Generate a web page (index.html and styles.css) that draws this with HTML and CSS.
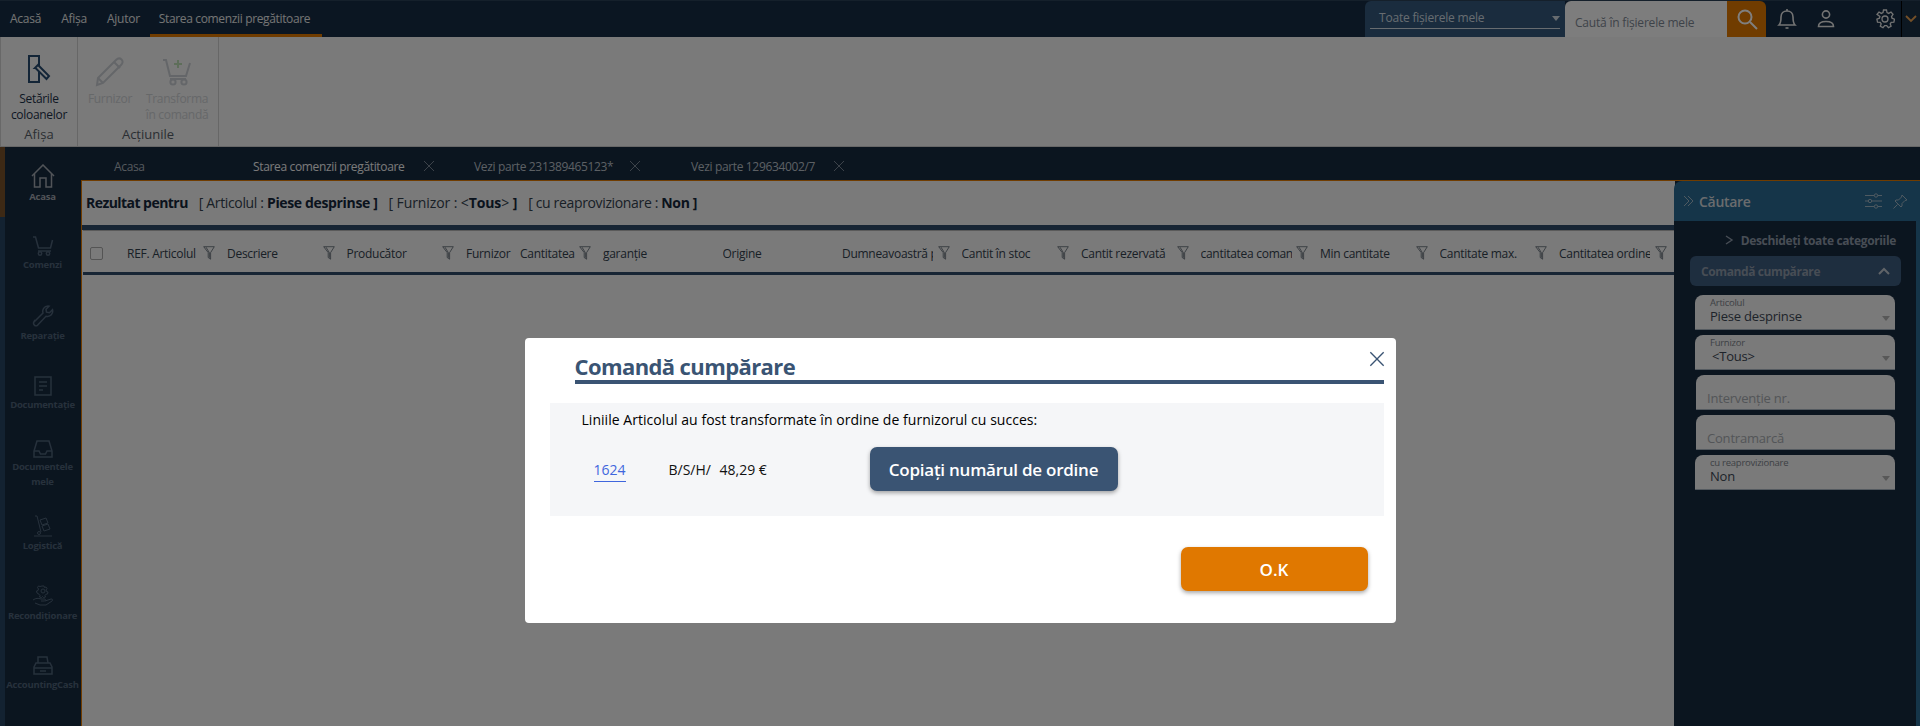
FILE: index.html
```html
<!DOCTYPE html>
<html lang="ro">
<head>
<meta charset="utf-8">
<title>Starea comenzii pregătitoare</title>
<link rel="stylesheet" href="styles.css">
</head>
<body>
<svg class="sprite" aria-hidden="true">
  <symbol id="funnel" viewBox="0 0 12 14"><path d="M.7.7h10.6L7.6 6.6v6.6l-1.300-.8-1.100-.9V6.600z M3 1.200l3.400 5.600v5" fill="none" stroke="currentColor" stroke-width=".8"/></symbol>
  <symbol id="cross" viewBox="0 0 12 12"><path d="M1 1l10 10M11 1L1 11" fill="none" stroke="currentColor" stroke-width="1"/></symbol>
  <symbol id="caret" viewBox="0 0 8 5"><path d="M0 0h8L4 5z" fill="currentColor"/></symbol>
</svg>

<div class="app">
  <header class="topbar">
    <nav class="menu">
      <a class="menu-item">Acasă</a>
      <a class="menu-item">Afișa</a>
      <a class="menu-item">Ajutor</a>
      <a class="menu-item menu-active">Starea comenzii pregătitoare</a>
    </nav>
    <div class="top-tools">
      <div class="scope"><span class="scope-text">Toate fișierele mele</span><svg class="scope-caret"><use href="#caret"/></svg></div>
      <div class="search-box"><span>Caută în fișierele mele</span></div>
      <div class="search-btn">
        <svg width="24" height="24" viewBox="0 0 24 24" fill="none" stroke="currentColor" stroke-width="2"><circle cx="10" cy="10" r="6.500"/><path d="M15 15l7 7"/></svg>
      </div>
      <div class="tool tool-bell">
        <svg width="20" height="22" viewBox="0 0 20 22" fill="none" stroke="currentColor" stroke-width="1.600"><path d="M2 17c2-2 2-4 2-8 0-3.500 2.500-6 6-6s6 2.500 6 6c0 4 0 6 2 8z"/><path d="M10 1v2"/><path d="M8.500 20h3"/></svg>
      </div>
      <div class="tool tool-user">
        <svg width="20" height="20" viewBox="0 0 20 20" fill="none" stroke="currentColor" stroke-width="1.600"><circle cx="10" cy="5.500" r="3.600"/><path d="M2.500 17.500c0-3.500 2.500-5 7.500-5s7.500 1.500 7.500 5z"/></svg>
      </div>
      <div class="tool tool-gear">
        <svg width="20" height="20" viewBox="0 0 20 20" fill="none" stroke="currentColor" stroke-width="1.300"><circle cx="10" cy="10" r="3"/><path d="M8.500 1h3l.5 2.600 1.700.8L16 3l2 2.400-1.500 2.100.5 1.700 2.500 1-.6 3-2.700.1-1 1.500.9 2.500-2.700 1.400-1.700-2h-2l-1.700 2-2.700-1.400.9-2.500-1-1.500-2.700-.1-.6-3 2.500-1 .5-1.700L2 5.400 4 3l2.300 1.400 1.700-.8z"/></svg>
      </div>
      <div class="tool-more">
        <svg width="12" height="8" viewBox="0 0 12 8" fill="none" stroke="currentColor" stroke-width="1.800"><path d="M1 1l5 5 5-5"/></svg>
      </div>
    </div>
  </header>

  <section class="ribbon">
    <div class="rib-group rib-view">
      <div class="rib-items">
        <div class="rib-item rib-columns">
          <svg class="rib-icon" width="24" height="28" viewBox="0 0 24 28" fill="none" stroke="#264a6e" stroke-width="2"><path d="M2 1h10v26H2z"/><path d="M8 13l3-3 11 11-2.500 3-11-11z" fill="#f4f4f4"/></svg>
          <span class="rib-label">Setările<br>coloanelor</span>
        </div>
      </div>
      <div class="rib-title">Afișa</div>
    </div>
    <div class="rib-group rib-actions">
      <div class="rib-items">
        <div class="rib-item rib-off rib-supplier">
          <svg class="rib-icon" width="30" height="30" viewBox="0 0 30 30" fill="none" stroke="#c9cdd2" stroke-width="2"><path d="M3 21L21 3c2-2 4-2 5.500-.5S28 6 26 8L8 26l-6 2z"/><path d="M19 5l6 6M3 21l5 5"/></svg>
          <span class="rib-label">Furnizor</span>
        </div>
        <div class="rib-item rib-off rib-order">
          <svg class="rib-icon" width="30" height="30" viewBox="0 0 30 30" fill="none" stroke="#c9cdd2" stroke-width="2"><path d="M1 3h3l4 16h16l4-13"/><circle cx="11" cy="25" r="2.600"/><circle cx="22" cy="25" r="2.600"/><path d="M8 22h16"/><path d="M16 3v8M12 7h8" stroke="#bcdcb4"/></svg>
          <span class="rib-label">Transforma<br>în comandă</span>
        </div>
      </div>
      <div class="rib-title">Acțiunile</div>
    </div>
  </section>

  <div class="workspace">
    <aside class="side">
      <a class="side-item side-current">
        <svg width="24" height="24" viewBox="0 0 24 24" fill="none" stroke="currentColor" stroke-width="1.500"><path d="M1 12L12 1l11 11"/><path d="M3.500 10v13h5.500v-9h6v9h5.500V10"/></svg>
        <span>Acasa</span>
      </a>
      <a class="side-item">
        <svg width="22" height="20" viewBox="0 0 22 20" fill="none" stroke="currentColor" stroke-width="1.500"><path d="M1 1h2.500l3 11h12l2-8"/><path d="M6 15h13"/><circle cx="8" cy="17.500" r="1.700"/><circle cx="16" cy="17.500" r="1.700"/></svg>
        <span>Comenzi</span>
      </a>
      <a class="side-item">
        <svg width="22" height="22" viewBox="0 0 22 22" fill="none" stroke="currentColor" stroke-width="1.500"><path d="M2 17L11 8c-1-3 1-7 5-7l1 .2-3 3 .5 3 3 .5 3-3c1 4-2 7.500-6.500 6.500l-8.500 9c-2 2-5-1-3.500-3.500z"/></svg>
        <span>Reparație</span>
      </a>
      <a class="side-item">
        <svg width="18" height="20" viewBox="0 0 18 20" fill="none" stroke="currentColor" stroke-width="1.500"><path d="M1 1h16v18H1z"/><path d="M5 6h8M5 10h8M5 14h4"/></svg>
        <span>Documentație</span>
      </a>
      <a class="side-item">
        <svg width="20" height="18" viewBox="0 0 20 18" fill="none" stroke="currentColor" stroke-width="1.500"><path d="M4 1h12l3 10v6H1v-6z"/><path d="M1 11h5l1.500 3h5L14 11h5"/></svg>
        <span>Documentele mele</span>
      </a>
      <a class="side-item">
        <svg width="18" height="22" viewBox="0 0 18 22" fill="none" stroke="currentColor" stroke-width="1"><path d="M1 1h2l4 16"/><path d="M6 5l6-2 2 5-6 2zM8 11l6-2 2 5-6 2z"/><circle cx="5" cy="18" r="1.500"/><path d="M0 21h18"/></svg>
        <span>Logistică</span>
      </a>
      <a class="side-item">
        <svg width="22" height="22" viewBox="0 0 22 22" fill="none" stroke="currentColor" stroke-width="1"><circle cx="11" cy="6" r="2"/><path d="M10 1h2l.5 1.500 1.500-.5 1 1.500-1 1.500.5 1.500 1.500.5-.5 2-1.500.2-1 1.300.5 1.500-2 .5-1-1-1 1-2-.5.5-1.500-1-1.300L5 8l-.5-2 1.500-.5.500-1.500-1-1.500 1-1.500 1.500.5z"/><path d="M1 15c3-2 5-2 8-1l4 0c1 1 0 2-1 2H9m4 0l6-2c2 0 2 1 1 2l-6 4H8l-5-2"/></svg>
        <span>Recondiționare</span>
      </a>
      <a class="side-item">
        <svg width="20" height="20" viewBox="0 0 20 20" fill="none" stroke="currentColor" stroke-width="1.500"><path d="M5 7V1h9l1 6"/><path d="M1 11l2-4h14l2 4v7H1z"/><path d="M1 12h18M7 15h6"/></svg>
        <span>AccountingCash</span>
      </a>
    </aside>

    <div class="main">
      <div class="tabs">
        <div class="tab tab-home">Acasa</div>
        <div class="tab tab-current"><span>Starea comenzii pregătitoare</span><svg class="tab-x"><use href="#cross"/></svg></div>
        <div class="tab tab-part-a"><span>Vezi parte 231389465123*</span><svg class="tab-x"><use href="#cross"/></svg></div>
        <div class="tab tab-part-b"><span>Vezi parte 129634002/7</span><svg class="tab-x"><use href="#cross"/></svg></div>
      </div>
      <div class="stage">
        <section class="results">
          <div class="criteria">
            <b class="crit-lead">Rezultat pentru</b>
            <span>[ Articolul : <b>Piese desprinse</b> <b>]</b></span>
            <span class="crit-wide">[ Furnizor : &lt;<b>Tous</b>&gt; <b>]</b></span>
            <span>[ cu reaprovizionare : <b>Non</b> <b>]</b></span>
          </div>
          <div class="thead">
            <div class="th-check"><i class="checkbox"></i></div>
            <div class="th w100"><span>REF. Articolul</span><svg class="funnel"><use href="#funnel"/></svg></div>
            <div class="th"><span>Descriere</span><svg class="funnel"><use href="#funnel"/></svg></div>
            <div class="th"><span>Producător</span><svg class="funnel"><use href="#funnel"/></svg></div>
            <div class="th w54"><span>Furnizor</span></div>
            <div class="th w83"><span>Cantitatea</span><svg class="funnel"><use href="#funnel"/></svg></div>
            <div class="th"><span>garanție</span></div>
            <div class="th"><span>Origine</span></div>
            <div class="th"><span>Dumneavoastră preț</span><svg class="funnel"><use href="#funnel"/></svg></div>
            <div class="th"><span>Cantit în stoc</span><svg class="funnel"><use href="#funnel"/></svg></div>
            <div class="th"><span>Cantit rezervată</span><svg class="funnel"><use href="#funnel"/></svg></div>
            <div class="th"><span>cantitatea comandată</span><svg class="funnel"><use href="#funnel"/></svg></div>
            <div class="th"><span>Min cantitate</span><svg class="funnel"><use href="#funnel"/></svg></div>
            <div class="th"><span>Cantitate max.</span><svg class="funnel"><use href="#funnel"/></svg></div>
            <div class="th"><span>Cantitatea ordine</span><svg class="funnel"><use href="#funnel"/></svg></div>
          </div>
        </section>

        <aside class="finder">
          <div class="finder-head">
            <svg width="11" height="12" viewBox="0 0 11 12" fill="none" stroke="currentColor" stroke-width="1"><path d="M1 1l5 5-5 5M5 1l5 5-5 5"/></svg>
            <b>Căutare</b>
            <svg class="finder-sliders" width="17" height="16" viewBox="0 0 17 16" fill="none" stroke="currentColor" stroke-width="1"><path d="M0 2.500h17M0 8h17M0 13.500h17"/><circle cx="11" cy="2.500" r="1.700" fill="#2a6a92"/><circle cx="5" cy="8" r="1.700" fill="#2a6a92"/><circle cx="11" cy="13.500" r="1.700" fill="#2a6a92"/></svg>
            <svg class="finder-pin" width="15" height="15" viewBox="0 0 15 15" fill="none" stroke="currentColor" stroke-width="1"><path d="M9 1l5 5-2 .5-3 3 0 2.500-1 1-6-6 1-1h2.500l3-3zM4.500 10.500L.5 14.500"/></svg>
          </div>
          <div class="finder-body">
            <div class="open-all">
              <svg width="9" height="10" viewBox="0 0 9 10" fill="none" stroke="currentColor" stroke-width="1.400"><path d="M1 1l6 4-6 4"/></svg>
              <b>Deschideți toate categoriile</b>
            </div>
            <div class="accordion"><b>Comandă cumpărare</b>
              <svg width="12" height="8" viewBox="0 0 12 8" fill="none" stroke="currentColor" stroke-width="2"><path d="M1 7l5-5 5 5"/></svg>
            </div>
            <div class="fields">
              <div class="field"><small>Articolul</small><span>Piese desprinse</span><svg class="field-caret"><use href="#caret"/></svg></div>
              <div class="field"><small>Furnizor</small><span class="tous">&lt;Tous&gt;</span><svg class="field-caret"><use href="#caret"/></svg></div>
              <div class="field field-text"><span>Intervenţie nr.</span></div>
              <div class="field field-text"><span>Contramarcă</span></div>
              <div class="field"><small>cu reaprovizionare</small><span>Non</span><svg class="field-caret"><use href="#caret"/></svg></div>
            </div>
          </div>
        </aside>
      </div>
    </div>
  </div>
</div>

<div class="overlay">
  <div class="modal">
    <svg class="modal-close"><use href="#cross"/></svg>
    <h1 class="modal-title">Comandă cumpărare</h1>
    <div class="modal-panel">
      <p class="modal-msg">Liniile Articolul au fost transformate în ordine de furnizorul cu succes:</p>
      <div class="modal-row">
        <a class="order-link">1624</a>
        <span class="order-sup">B/S/H/</span>
        <span class="order-amt">48,29 €</span>
        <button class="btn btn-copy">Copiați numărul de ordine</button>
      </div>
    </div>
    <div class="modal-foot"><button class="btn btn-ok">O.K</button></div>
  </div>
</div>
</body>
</html>
```

FILE: styles.css
```css
* { box-sizing: border-box; }
html, body { height: 100%; }
body {
  margin: 0;
  overflow: hidden;
  font-family: "Open Sans", "Noto Sans", sans-serif;
  font-size: 12px;
  color: #1c2b3c;
  background: #f4f4f4;
}
a { color: inherit; text-decoration: none; }
button { font-family: inherit; }
.sprite { display: none; }

.app { display: flex; flex-direction: column; height: 726px; }

/* top bar */
.topbar {
  flex: 0 0 37px;
  display: flex;
  justify-content: space-between;
  background: #172d44;
  color: #e8e8e8;
  border-top: 1px solid #2b4157;
}
.menu { display: flex; white-space: nowrap; }
.menu-item {
  display: flex;
  align-items: center;
  padding: 2px 10px 0;
  letter-spacing: -.25px;
  border-bottom: 3px solid transparent;
}
.menu-active {
  width: 172px;
  padding-left: 9px;
  letter-spacing: -.35px;
  border-bottom-color: #e07800;
}
.top-tools { display: flex; align-items: stretch; color: #e6e6e6; white-space: nowrap; }
.scope {
  width: 200px;
  background: #34587c;
  border-radius: 6px 0 0 0;
  position: relative;
  padding: 8px 5px 0;
  color: #cfd8e0;
}
.scope-text { display: block; height: 20px; padding-left: 9px; border-bottom: 1px solid #cfd8e0; letter-spacing: -.2px; }
.scope-caret { position: absolute; right: 5px; top: 15px; width: 8px; height: 5px; color: #cfd8e0; }
.search-box {
  width: 162px;
  background: #fafafa;
  border-radius: 6px 0 0 0;
  padding: 13px 10px 0;
  color: #7d8793;
  letter-spacing: -.2px;
}
.search-btn {
  width: 39px;
  background: #e07800;
  border-radius: 0 6px 0 0;
  display: flex;
  align-items: center;
  justify-content: center;
  color: #fff;
  padding-bottom: 1px;
}
.tool { display: flex; align-items: center; justify-content: center; padding-bottom: 1px; }
.tool-bell { width: 42px; }
.tool-user { width: 36px; }
.tool-gear { width: 57px; padding-left: 25px; }
.tool-more {
  width: 19px;
  display: flex;
  align-items: center;
  justify-content: center;
  border-left: 1px solid #000;
  color: #e8a050;
  background: #1b3044;
}

/* ribbon */
.ribbon {
  flex: 0 0 110px;
  display: flex;
  background: #f4f4f4;
  border-bottom: 1px solid #cfcfcf;
  border-left: 1px solid #d0d0d0;
}
.rib-group {
  display: flex;
  flex-direction: column;
  border-right: 1px solid #cfcfcf;
}
.rib-view { width: 77px; }
.rib-actions { width: 141px; }
.rib-items { flex: 1; display: flex; }
.rib-item {
  display: flex;
  flex-direction: column;
  align-items: center;
  padding-top: 18px;
  color: #1c3048;
  text-align: center;
  line-height: 16px;
}
.rib-columns { width: 100%; }
.rib-supplier { width: 64px; }
.rib-order { width: 70px; }
.rib-icon { flex: none; margin-bottom: 8px; }
.rib-off { color: #cdd0d3; padding-top: 20px; }
.rib-off .rib-icon { margin-bottom: 4px; }
.rib-label { letter-spacing: -.3px; white-space: nowrap; }
.rib-title { text-align: center; color: #565d66; padding-bottom: 3px; line-height: 17px; font-size: 13px; }

/* workspace */
.workspace { flex: 1; display: flex; min-height: 0; }
.side {
  width: 81px;
  flex: none;
  background: #172a3f;
  border-left: 5px solid #264462;
  position: relative;
}
.side::before {
  content: "";
  position: absolute;
  left: -5px;
  top: 0;
  width: 5px;
  height: 70px;
  background: #7a532a;
}
.side-item {
  height: 70px;
  display: flex;
  flex-direction: column;
  align-items: center;
  justify-content: center;
  padding-top: 4px;
  gap: 1px;
  font-size: 9.500px;
  line-height: 15px;
  font-weight: 700;
  color: #4e6378;
  text-align: center;
  letter-spacing: -.25px;
}
.side-item span { display: block; width: 74px; margin-left: -1px; }
.side-item svg { flex: none; }
.side-current { color: #a2a9b1; }

.main { flex: 1; min-width: 0; display: flex; flex-direction: column; background: #172a3f; }
.tabs { flex: 0 0 33px; display: flex; align-items: center; color: #b9c0c8; padding-top: 5px; }
.tab { display: flex; align-items: center; letter-spacing: -.35px; white-space: nowrap; }
.tab-home { width: 172px; padding-left: 33px; color: #aab2bb; }
.tab-current { width: 221px; color: #f4f4f4; }
.tab-part-a { width: 217px; }
.tab-current span { width: 170px; }
.tab-part-a span { width: 155px; }
.tab-part-b span { width: 142px; }
.tab-x { width: 12px; height: 12px; flex: none; color: #7a8794; }

.stage { flex: 1; display: flex; min-height: 0; border-top: 1px solid #e07800; }
.results {
  flex: 1;
  min-width: 0;
  background: #f4f4f4;
  border-left: 1px solid #e07800;
}
.criteria {
  height: 49px;
  display: flex;
  align-items: center;
  padding: 0 0 1px 4px;
  gap: 11px;
  font-size: 14px;
  letter-spacing: -.35px;
  color: #33404d;
  border-bottom: 5px solid #2f4a68;
  white-space: nowrap;
}
.criteria b { color: #14263a; font-weight: 700; }
.criteria .crit-lead { letter-spacing: -.55px; }
.criteria .crit-wide { letter-spacing: -.1px; }
.thead {
  height: 45px;
  display: flex;
  align-items: center;
  border-top: 1px solid #b4b4b4;
  border-bottom: 3px solid #2f4a68;
  padding: 3px 8px 0 0;
  margin-left: 1px;
}
.th-check { width: 44px; flex: none; padding-left: 7px; }
.checkbox { display: block; width: 13px; height: 13px; border: 1px solid #a8a8a8; border-radius: 2px; }
.th {
  width: 119.500px;
  flex: none;
  padding-right: 3px;
  display: flex;
  align-items: center;
  justify-content: space-between;
  font-size: 12px;
  letter-spacing: -.28px;
  color: #33404d;
}
.th span { overflow: hidden; white-space: nowrap; flex: 1; min-width: 0; max-width: 91px; margin-right: auto; }
.w100 { width: 100px; }
.w54 { width: 54px; }
.w83 { width: 83px; }
.funnel { width: 12px; height: 14px; flex: none; color: #5a646e; margin-right: 9px; }

/* search panel */
.finder {
  flex: 0 0 246px;
  display: flex;
  flex-direction: column;
  border-radius: 8px 0 0 0;
  color: #c8d0d8;
  margin-left: -1px;
  background: #2a6a92;
}
.finder-head {
  flex: 0 0 40px;
  display: flex;
  align-items: center;
  padding-left: 9px;
  font-size: 14px;
}
.finder-head b { margin-left: 5px; color: #d4d8dc; letter-spacing: -.3px; font-weight: 600; }
.finder-head svg { color: #9fb4c2; }
.finder-sliders { margin-left: auto; }
.finder-pin { margin: 0 12px 0 11px; }
.finder-body {
  flex: 1;
  margin-right: 4px;
  background: #172a3f;
  padding: 9px 0 0 16px;
}
.open-all {
  display: flex;
  align-items: center;
  justify-content: flex-end;
  gap: 7px;
  padding-right: 20px;
  height: 20px;
  font-size: 12px;
  letter-spacing: -.35px;
  color: #8f9baa;
}
.open-all b { font-weight: 700; }
.accordion {
  margin-top: 6px;
  width: 211px;
  height: 30px;
  padding: 0 11px;
  border-radius: 6px;
  background: #3d5c7e;
  display: flex;
  align-items: center;
  justify-content: space-between;
  color: #8f9baa;
  font-size: 12px;
  letter-spacing: -.4px;
}
.accordion b { font-weight: 700; }
.accordion svg { color: #c0c8d0; }
.fields { margin: 9px 0 0 5px; width: 200px; display: flex; flex-direction: column; gap: 5px; }
.field {
  position: relative;
  height: 35px;
  background: #f4f4f4;
  border-radius: 8px 8px 0 0;
  border-bottom: 1px solid #a9b4c0;
  padding: 2px 0 0 15px;
  color: #3d4754;
  line-height: 14px;
}
.field small { display: block; font-size: 9.500px; letter-spacing: -.25px; line-height: 11px; color: #7c838b; }
.field span { font-size: 13px; line-height: 17px; display: block; letter-spacing: -.2px; }
.field .tous { padding-left: 2px; }
.field-text { padding: 15px 0 0 11px; margin-left: 1px; }
.field-text span { color: #a7abb0; }
.field-caret { position: absolute; right: 5px; bottom: 8px; width: 8px; height: 5px; color: #b0b0b0; }

/* modal */
.overlay {
  position: fixed;
  inset: 0;
  background: rgba(0, 0, 0, .5);
  display: flex;
  justify-content: center;
  align-items: flex-start;
  padding-top: 338px;
}
.modal {
  position: relative;
  width: 871px;
  height: 285px;
  background: #fff;
  border-radius: 4px;
  padding-top: 14px;
}
.modal-close { position: absolute; right: 11px; top: 12px; width: 16px; height: 18px; color: #3a5473; }
.modal-title {
  margin: 0 12px 0 50px;
  height: 32px;
  font-size: 22px;
  line-height: 28px;
  font-weight: 700;
  letter-spacing: -.6px;
  color: #3a5473;
  border-bottom: 4px solid #3a5473;
}
.modal-panel {
  margin: 19px 12px 0 25px;
  height: 113px;
  background: #f5f6f8;
  padding: 6px 0 0 32px;
}
.modal-msg { margin: 0; font-size: 14px; line-height: 22px; color: #000; letter-spacing: .04px; }
.modal-row { display: flex; align-items: flex-start; margin: 16px 0 0 -1px; font-size: 14px; color: #111; }
.order-link {
  margin: 13px 0 0 13px;
  width: 32px;
  height: 22px;
  line-height: 19px;
  text-align: center;
  color: #3f66dd;
  border-bottom: 1px solid #3f66dd;
}
.order-sup { margin: 13px 0 0 43px; line-height: 19px; width: 51px; }
.order-amt { margin-top: 13px; line-height: 19px; width: 150px; }
.btn {
  border: 0;
  color: #fff;
  font-weight: 600;
  border-radius: 7px;
  box-shadow: 0 2px 4px rgba(0, 0, 0, .35);
}
.btn-copy { width: 248px; height: 44px; background: #3a5473; font-size: 17px; letter-spacing: -.25px; }
.modal-foot { display: flex; justify-content: flex-end; padding: 31px 28px 0 0; }
.btn-ok { width: 187px; height: 44px; background: #e07800; font-size: 17px; padding-top: 2px; }
```
